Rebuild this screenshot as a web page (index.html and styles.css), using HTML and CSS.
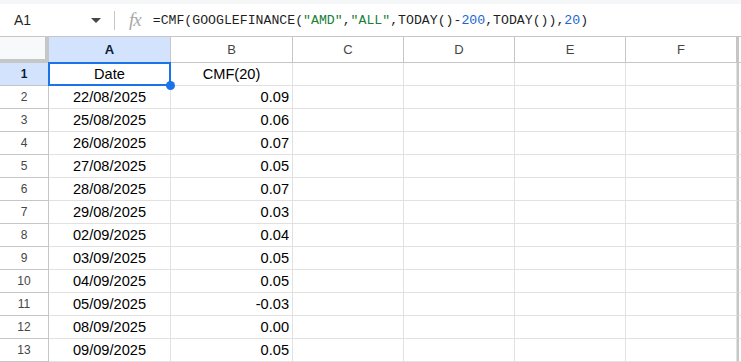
FILE: index.html
```html
<!DOCTYPE html>
<html lang="en">
<head>
  <meta charset="UTF-8" />
  <title>CMF sheet</title>
  <link rel="stylesheet" href="styles.css">
</head>
<body>
  <!-- Formula bar -->
  <div class="formula-bar">
    <div class="name-box">
      <span class="cell-ref">A1</span>
      <svg class="caret" width="10" height="5" viewBox="0 0 10 5"><path d="M0 0 L10 0 L5 5 Z" fill="#444746"/></svg>
    </div>
    <span class="divider"></span>
    <span class="fx">fx</span>
    <div class="formula">=CMF(GOOGLEFINANCE(<span class="str">"AMD"</span>,<span class="str">"ALL"</span>,TODAY()-<span class="num">200</span>,TODAY()),<span class="num">20</span>)</div>
  </div>

  <!-- Grid -->
  <div class="sheet" id="sheet"></div>

  <script>
const sheet = document.getElementById("sheet");
const cols = ["A", "B", "C", "D", "E", "F"];
const rows = [
  ["Date", "CMF(20)"],
  ["22/08/2025", "0.09"],
  ["25/08/2025", "0.06"],
  ["26/08/2025", "0.07"],
  ["27/08/2025", "0.05"],
  ["28/08/2025", "0.07"],
  ["29/08/2025", "0.03"],
  ["02/09/2025", "0.04"],
  ["03/09/2025", "0.05"],
  ["04/09/2025", "0.05"],
  ["05/09/2025", "-0.03"],
  ["08/09/2025", "0.00"],
  ["09/09/2025", "0.05"]
];

function cell(cls, text) {
  const div = document.createElement("div");
  div.className = cls;
  div.textContent = text || "";
  sheet.appendChild(div);
  return div;
}

// Header row
cell("corner");
cols.forEach(c => cell(c === "A" ? "col-head active" : "col-head", c));
cell("edge head-edge");

// Data rows
rows.forEach((row, i) => {
  cell(i === 0 ? "row-head active" : "row-head", i + 1);
  cell(i === 0 ? "cell center selected" : "cell center", row[0]);
  cell(i === 0 ? "cell center" : "cell right", row[1]);
  for (let k = 0; k < 4; k++) cell("cell");
  cell("edge");
});
  </script>
</body>
</html>
```

FILE: styles.css
```css
* {
  box-sizing: border-box;
}

body {
  margin: 0;
  background: #fff;
  font-family: "Liberation Sans", Arial, sans-serif;
  overflow: hidden;
}

.formula-bar {
  height: 36px;
  border-top: 4px solid #f5f6f8;
  display: flex;
  align-items: center;
  background: #fff;
}

.name-box {
  width: 114px;
  display: flex;
  align-items: center;
  padding-left: 14px;
}

.cell-ref {
  font-size: 14px;
  color: #1f1f1f;
  flex: 1;
}

.caret {
  margin-right: 13px;
}

.divider {
  width: 1px;
  height: 19px;
  background: #c7c7c7;
}

.fx {
  font-family: "Liberation Serif", serif;
  font-style: italic;
  font-size: 19px;
  color: #a8a8a8;
  margin-left: 14px;
  margin-right: 12px;
  letter-spacing: -1px;
}

.formula {
  font-family: "Liberation Mono", monospace;
  font-size: 13.2px;
  color: #1f1f1f;
  white-space: nowrap;
}

.formula .str {
  color: #188038;
}

.formula .num {
  color: #1967d2;
}

.sheet {
  display: grid;
  grid-template-columns: 49px 122px 122px 111px 111px 111px 111px 1fr;
  grid-template-rows: 26px;
  grid-auto-rows: 23px;
  border-top: 1px solid #c4c7c5;
}

.corner {
  background: #f8f9fa;
  border-right: 4px solid #c4c7c5;
  border-bottom: 4px solid #c4c7c5;
}

.col-head {
  display: flex;
  align-items: center;
  justify-content: center;
  font-size: 13px;
  color: #444746;
  background: #fff;
  border-right: 1px solid #c4c7c5;
  border-bottom: 1px solid #c4c7c5;
}

.row-head {
  display: flex;
  align-items: center;
  justify-content: center;
  font-size: 12px;
  color: #444746;
  border-right: 1px solid #c4c7c5;
  border-bottom: 1px solid #c4c7c5;
}

.col-head.active,
.row-head.active {
  background: #d3e3fd;
  color: #0b1b3a;
  font-weight: bold;
}

.cell {
  display: flex;
  align-items: center;
  font-size: 14.6px;
  color: #000;
  padding: 0 3px;
  border-right: 1px solid #e1e1e1;
  border-bottom: 1px solid #e1e1e1;
  white-space: nowrap;
}

.cell.center {
  justify-content: center;
}

.cell.right {
  justify-content: flex-end;
}

.cell.selected {
  position: relative;
}

.cell.selected::after {
  content: "";
  position: absolute;
  left: -1px;
  top: -1px;
  right: -1px;
  bottom: -1px;
  border: 2px solid #1a73e8;
}

.cell.selected::before {
  content: "";
  position: absolute;
  right: -5px;
  bottom: -5px;
  width: 9px;
  height: 9px;
  border-radius: 50%;
  background: #1a73e8;
  z-index: 2;
}

.edge {
  border-left: 2px solid #c4c7c5;
  border-bottom: 1px solid #e1e1e1;
}

.edge.head-edge {
  border-bottom-color: #c4c7c5;
}
```
